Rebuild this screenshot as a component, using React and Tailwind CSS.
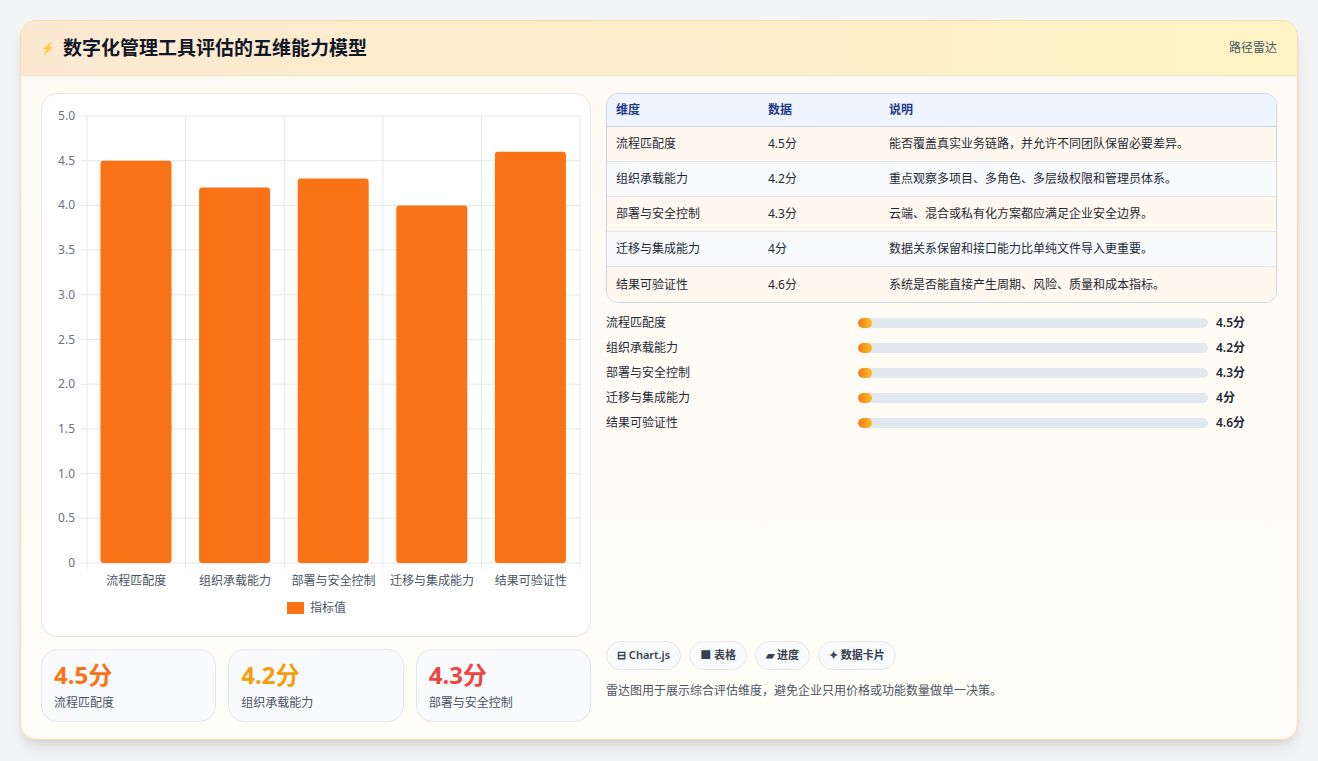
import React from "react";

const rows = [
  { name: "流程匹配度", value: 4.5, note: "能否覆盖真实业务链路，并允许不同团队保留必要差异。" },
  { name: "组织承载能力", value: 4.2, note: "重点观察多项目、多角色、多层级权限和管理员体系。" },
  { name: "部署与安全控制", value: 4.3, note: "云端、混合或私有化方案都应满足企业安全边界。" },
  { name: "迁移与集成能力", value: 4, note: "数据关系保留和接口能力比单纯文件导入更重要。" },
  { name: "结果可验证性", value: 4.6, note: "系统是否能直接产生周期、风险、质量和成本指标。" },
];

const font = { fontFamily: '"Noto Sans", "Noto Sans CJK SC", sans-serif' };

const Chart = () => {
  const x0 = 45, x1 = 538, y0 = 22, y1 = 469;
  const h = y1 - y0;
  const slot = (x1 - x0) / 5;
  const ticks = [0, 0.5, 1, 1.5, 2, 2.5, 3, 3.5, 4, 4.5, 5];
  return (
    <svg width="550" height="543" className="block" style={font}>
      {ticks.map((t) => {
        const y = y1 - (t / 5) * h;
        return (
          <g key={t}>
            <line x1={x0 - 6} x2={x1} y1={y} y2={y} stroke="#e5e7eb" />
            <text x={x0 - 12} y={y + 4} fontSize="12" fill="#6b7280" textAnchor="end">
              {t === 0 ? "0" : t.toFixed(1)}
            </text>
          </g>
        );
      })}
      {[0, 1, 2, 3, 4, 5].map((i) => (
        <line key={i} x1={x0 + i * slot} x2={x0 + i * slot} y1={y0} y2={y1 + 6} stroke="#e5e7eb" />
      ))}
      {rows.map((r, i) => {
        const bh = (r.value / 5) * h;
        const bx = x0 + i * slot + 13.5;
        return (
          <g key={r.name}>
            <rect x={bx} y={y1 - bh} width={71} height={bh} rx="3" fill="#f97316" />
            <text x={x0 + i * slot + slot / 2} y={y1 + 22} fontSize="12" fill="#4b5563" textAnchor="middle">
              {r.name}
            </text>
          </g>
        );
      })}
      <rect x="245" y="508" width="17" height="12" fill="#f97316" />
      <text x="268" y="518" fontSize="12" fill="#4b5563">指标值</text>
    </svg>
  );
};

const App = () => {
  return (
    <div className="w-[1318px] h-[761px] bg-[#f3f4f6] pt-[20px] px-[20px]" style={font}>
      <div className="h-[720px] rounded-2xl border border-[#fcd9a8] bg-gradient-to-b from-[#fffaf3] to-[#fffdf8] shadow-lg overflow-hidden flex flex-col">
        <div className="h-[55px] flex items-center justify-between px-5 bg-gradient-to-r from-[#fde9d2] to-[#fdf3c4] border-b border-[#f3e3c7]">
          <div className="flex items-center gap-2">
            <span className="text-[#4f46e5] text-[11px]">⚡</span>
            <h1 className="text-[19px] font-bold text-[#111827]">数字化管理工具评估的五维能力模型</h1>
          </div>
          <span className="text-[12px] text-[#4b5563]">路径雷达</span>
        </div>
        <div className="flex gap-[15px] px-5 pt-[17px]">
          <div className="w-[550px] flex flex-col gap-3">
            <div className="h-[544px] bg-white border border-[#e5e7eb] rounded-2xl overflow-hidden">
              <Chart />
            </div>
            <div className="grid grid-cols-3 gap-3">
              {rows.slice(0, 3).map((r, i) => (
                <div key={r.name} className="h-[73px] rounded-2xl border border-[#e2e8f0] bg-[#f8fafc] px-3 pt-[10px]">
                  <div className={`text-[24px] font-bold leading-[30px] ${i === 0 ? "text-[#f97316]" : i === 1 ? "text-[#f59e0b]" : "text-[#ef4444]"}`}>{r.value}分</div>
                  <div className="text-[12px] text-[#4b5563] mt-[4px]">{r.name}</div>
                </div>
              ))}
            </div>
          </div>
          <div className="flex-1 flex flex-col">
            <div className="rounded-xl border border-[#cbd5e1] overflow-hidden text-[12px]">
              <div className="h-[33px] flex items-center bg-[#eef5fe] text-[#1e3a8a] font-semibold border-b border-[#cbd5e1]">
                <div className="w-[161px] pl-[9px]">维度</div>
                <div className="w-[121px]">数据</div>
                <div>说明</div>
              </div>
              {rows.map((r, i) => (
                <div key={r.name} className={`h-[35px] flex items-center text-[#1f2937] ${i < 4 ? "border-b border-[#e5e7eb]" : ""} ${i % 2 === 0 ? "bg-[#fef8ee]" : "bg-[#f8fafc]"}`}>
                  <div className="w-[161px] pl-[9px]">{r.name}</div>
                  <div className="w-[121px]">{r.value}分</div>
                  <div>{r.note}</div>
                </div>
              ))}
            </div>
            <div className="flex flex-col mt-[7px]">
              {rows.map((r) => (
                <div key={r.name} className="h-[25px] flex items-center text-[12px] text-[#1f2937]">
                  <div className="w-[252px]">{r.name}</div>
                  <div className="w-[350px] h-[10px] rounded-full bg-[#e2e8f0] overflow-hidden">
                    <div className="w-[14px] h-full rounded-full bg-gradient-to-r from-[#f97316] to-[#fbbf24]" />
                  </div>
                  <div className="ml-2 font-semibold">{r.value}分</div>
                </div>
              ))}
            </div>
            <div className="mt-auto flex gap-[8px]">
              {["⊟ Chart.js", "■ 表格", "▰ 进度", "✦ 数据卡片"].map((c) => (
                <span key={c} className="h-[29px] px-[10px] flex items-center rounded-full border border-[#e5e7eb] bg-[#f8fafc] text-[11px] font-semibold text-[#374151]">{c}</span>
              ))}
            </div>
            <p className="text-[12px] text-[#4b5563] mt-[12px] mb-[22px]">雷达图用于展示综合评估维度，避免企业只用价格或功能数量做单一决策。</p>
          </div>
        </div>
      </div>
    </div>
  );
};

export default App;
